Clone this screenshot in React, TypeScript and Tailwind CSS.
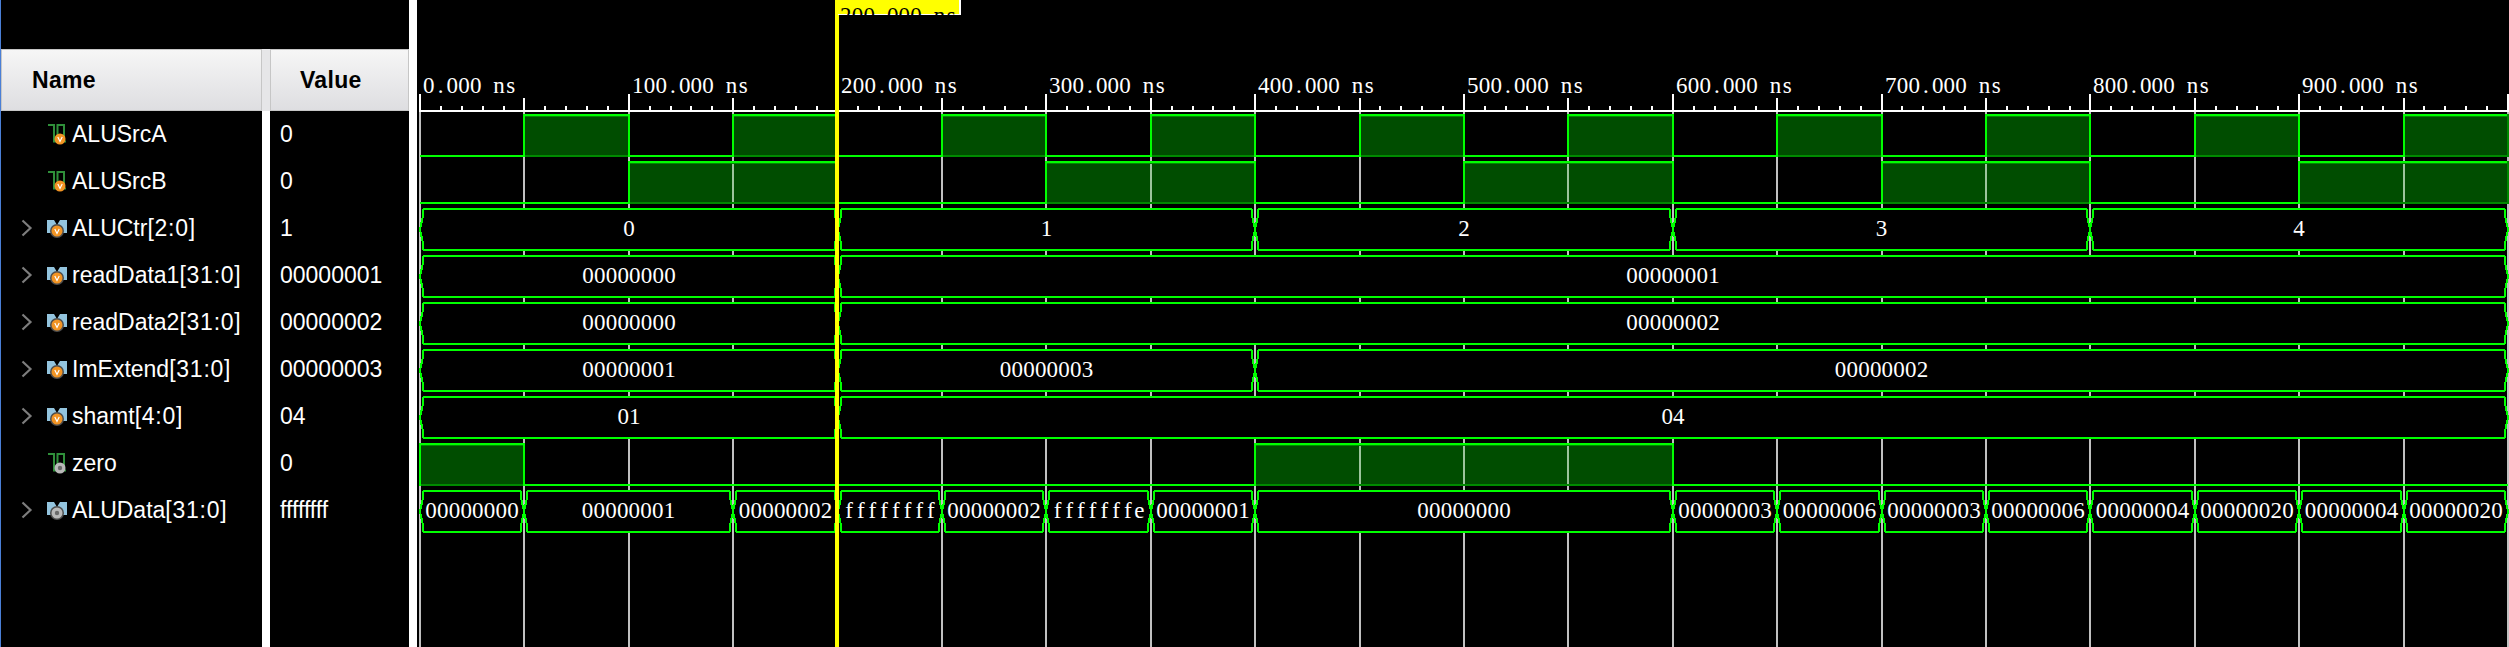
import { FC } from "react";

type Signal = { name: string; range?: string; value: string; bus: boolean; dim?: boolean };

const signals: Signal[] = [
  { name: "ALUSrcA", value: "0", bus: false },
  { name: "ALUSrcB", value: "0", bus: false },
  { name: "ALUCtr", range: "[2:0]", value: "1", bus: true },
  { name: "readData1", range: "[31:0]", value: "00000001", bus: true },
  { name: "readData2", range: "[31:0]", value: "00000002", bus: true },
  { name: "ImExtend", range: "[31:0]", value: "00000003", bus: true },
  { name: "shamt", range: "[4:0]", value: "04", bus: true },
  { name: "zero", value: "0", bus: false, dim: true },
  { name: "ALUData", range: "[31:0]", value: "ffffffff", bus: true, dim: true },
];

const X0 = 420;
const PX_PER_NS = 2.088;
const xAt = (ns: number) => Math.round(X0 + ns * PX_PER_NS);

const GREEN = "#00ff00";
const FILL = "#004d00";
const DARK = "#008a00";
const CELL = 11.7;

const charWidth = (c: string) => {
  if (c === "f") return 0.333;
  if (c === "e") return 0.444;
  if (c === "s") return 0.389;
  if (c === "." || c === " ") return 0.25;
  return 0.5;
};

// the simulator draws a fixed pitch font, so every glyph gets its own cell
const cellXs = (text: string, start: number) =>
  text
    .split("")
    .map((c, i) => (start + i * CELL + (CELL - charWidth(c) * 23) / 2).toFixed(1))
    .join(" ");

const wires: { top: number; highs: [number, number][] }[] = [
  {
    top: 115,
    highs: [
      [50, 100],
      [150, 200],
      [250, 300],
      [350, 400],
      [450, 500],
      [550, 600],
      [650, 700],
      [750, 800],
      [850, 900],
      [950, 1000],
    ],
  },
  {
    top: 162,
    highs: [
      [100, 200],
      [300, 400],
      [500, 600],
      [700, 800],
      [900, 1000],
    ],
  },
  { top: 444, highs: [[0, 50], [400, 600]] },
];

const buses: { top: number; segs: [number, number, string][] }[] = [
  {
    top: 209,
    segs: [
      [0, 200, "0"],
      [200, 400, "1"],
      [400, 600, "2"],
      [600, 800, "3"],
      [800, 1000, "4"],
    ],
  },
  { top: 256, segs: [[0, 200, "00000000"], [200, 1000, "00000001"]] },
  { top: 303, segs: [[0, 200, "00000000"], [200, 1000, "00000002"]] },
  {
    top: 350,
    segs: [
      [0, 200, "00000001"],
      [200, 400, "00000003"],
      [400, 1000, "00000002"],
    ],
  },
  { top: 397, segs: [[0, 200, "01"], [200, 1000, "04"]] },
  {
    top: 491,
    segs: [
      [0, 50, "00000000"],
      [50, 150, "00000001"],
      [150, 200, "00000002"],
      [200, 250, "ffffffff"],
      [250, 300, "00000002"],
      [300, 350, "fffffffe"],
      [350, 400, "00000001"],
      [400, 600, "00000000"],
      [600, 650, "00000003"],
      [650, 700, "00000006"],
      [700, 750, "00000003"],
      [750, 800, "00000006"],
      [800, 850, "00000004"],
      [850, 900, "00000020"],
      [900, 950, "00000004"],
      [950, 1000, "00000020"],
    ],
  },
];

const range = (n: number, step: number) =>
  Array.from({ length: n }, (_, i) => i * step);

const Chevron: FC = () => (
  <svg width="12" height="18" viewBox="0 0 12 18" fill="none">
    <polyline points="1.5,1.5 9.5,9 1.5,16.5" stroke="#7d7d7d" strokeWidth="2.2" />
  </svg>
);

const Badge: FC<{ dim?: boolean; cx: number; cy: number }> = ({ dim, cx, cy }) =>
  dim ? (
    <>
      <circle cx={cx} cy={cy} r="5.5" fill="#b9b9b9" />
      <circle cx={cx} cy={cy} r="2.2" fill="#6a6a6a" />
    </>
  ) : (
    <>
      <circle cx={cx} cy={cy} r="5.5" fill="#f29423" />
      <polyline
        points={`${cx - 2.2},${cy - 2} ${cx},${cy + 2.5} ${cx + 2.2},${cy - 2}`}
        fill="none"
        stroke="#fff"
        strokeWidth="1.2"
      />
    </>
  );

const SignalIcon: FC<{ bus: boolean; dim?: boolean }> = ({ bus, dim }) => (
  <svg width="22" height="22" viewBox="0 0 22 22" className="shrink-0">
    {bus ? (
      <>
        <path d="M0 3 H7 L10 8 L13 3 H20 V16 H13.5 L10 12 L6.5 16 H0 Z" fill="#93c4de" />
        <circle cx="10" cy="14" r="7" fill="#4d4d4d" />
        <Badge dim={dim} cx={10} cy={14} />
      </>
    ) : (
      <>
        <path
          d="M1 2 H7 V18.5 H19 M10.5 18.5 V2 H17 V18.5"
          fill="none"
          stroke="#2f8f3a"
          strokeWidth="2"
        />
        <Badge dim={dim} cx={13} cy={16} />
      </>
    )}
  </svg>
);

const HeaderCell: FC<{ label: string; pad: string }> = ({ label, pad }) => (
  <div
    className={`flex h-[62px] items-center border border-[#c6c6c6] bg-gradient-to-b from-[#f6f6f6] to-[#dedee1] text-[23px] font-bold tracking-[0.3px] text-black ${pad}`}
  >
    {label}
  </div>
);

const NamePanel: FC = () => (
  <div className="flex w-[261px] shrink-0 flex-col">
    <div className="h-[49px]" />
    <HeaderCell label="Name" pad="pl-[30px]" />
    {signals.map((s) => (
      <div key={s.name} className="flex h-[47px] items-center pb-px text-[23px] text-white">
        <div className="ml-[20px] w-[26px]">{s.bus && <Chevron />}</div>
        <SignalIcon bus={s.bus} dim={s.dim} />
        <span className="ml-[3px] whitespace-nowrap">
          {s.name}
          {s.range && <span className="tracking-[0.75px]">{s.range}</span>}
        </span>
      </div>
    ))}
  </div>
);

const ValuePanel: FC = () => (
  <div className="flex w-[139px] shrink-0 flex-col">
    <div className="h-[49px]" />
    <HeaderCell label="Value" pad="pl-[29px]" />
    {signals.map((s) => (
      <div key={s.name} className="flex h-[47px] items-center pb-px pl-[10px] text-[23px] text-white">
        {s.value}
      </div>
    ))}
  </div>
);

const Wave: FC = () => {
  const serif = "font-['Liberation_Serif',serif] text-[23px]";
  return (
    <svg
      className="h-[647px] w-[2092px] shrink-0"
      viewBox="417 0 2092 647"
      shapeRendering="crispEdges"
    >
      <defs>
        <clipPath id="cursor-label">
          <rect x="835" y="0" width="125" height="15" />
        </clipPath>
      </defs>

      {/* ruler */}
      <rect x="419" y="110" width="2090" height="2" fill="#fff" />
      {range(101, 10).map((ns) => {
        const top = ns % 100 === 0 ? 94 : ns % 50 === 0 ? 98 : 106;
        return <rect key={ns} x={xAt(ns) - 1} y={top} width="2" height={111 - top} fill="#fff" />;
      })}
      {range(10, 100).map((ns) => {
        const label = `${ns}.000 ns`;
        return (
          <text key={ns} y="93" x={cellXs(label, xAt(ns) + 3)} className={`fill-white ${serif}`}>
            {label}
          </text>
        );
      })}

      {/* grid */}
      {range(21, 50).map((ns) => (
        <rect key={ns} x={xAt(ns) - 1} y="112" width="2" height="535" fill="#c0c0c0" />
      ))}

      {/* single bit signals */}
      {wires.map((w) => {
        const low = w.top + 41;
        let last = 0;
        const lows: [number, number][] = [];
        w.highs.forEach(([a, b]) => {
          if (a > last) lows.push([last, a]);
          last = b;
        });
        if (last < 1000) lows.push([last, 1000]);
        return (
          <g key={w.top}>
            {lows.map(([a, b]) => (
              <rect key={a} x={xAt(a)} y={low - 1} width={xAt(b) - xAt(a)} height="2" fill={GREEN} />
            ))}
            {w.highs.map(([a, b]) => (
              <g key={a}>
                <rect x={xAt(a)} y={w.top} width={xAt(b) - xAt(a)} height={41} fill={FILL} />
                {range(Math.round((b - a) / 50) - 1, 50).map((n) => (
                  <rect
                    key={n}
                    x={xAt(a + 50 + n) - 1}
                    y={w.top}
                    width="2"
                    height="41"
                    fill="#9cc49c"
                  />
                ))}
                <rect x={xAt(a)} y={low - 1} width={xAt(b) - xAt(a)} height="2" fill={DARK} />
                <rect x={xAt(a)} y={w.top + 1} width={xAt(b) - xAt(a)} height="1" fill={DARK} />
                <rect x={xAt(a) - 1} y={w.top - 1} width={xAt(b) - xAt(a) + 2} height="2" fill={GREEN} />
                <rect x={xAt(a) - 1} y={w.top - 1} width="2" height={43} fill={GREEN} />
                <rect x={xAt(b) - 1} y={w.top - 1} width="2" height={43} fill={b === 1000 ? DARK : GREEN} />
              </g>
            ))}
          </g>
        );
      })}

      {/* buses */}
      {buses.map((b) => {
        const top = b.top;
        const bot = b.top + 41;
        const mid = b.top + 20.5;
        return (
          <g key={top}>
            {b.segs.map(([a, e, label]) => {
              const l = xAt(a);
              const r = xAt(e);
              const pts = [
                [l + 3.5, top],
                [r - 3.5, top],
                [r - 2.5, top + 9],
                [r, mid],
                [r - 2.5, bot - 9],
                [r - 3.5, bot],
                [l + 3.5, bot],
                [l + 2.5, bot - 9],
                [l, mid],
                [l + 2.5, top + 9],
              ]
                .map((p) => p.join(","))
                .join(" ");
              const width = label.length * CELL;
              return (
                <g key={a}>
                  <polygon points={pts} fill="#000" stroke={GREEN} strokeWidth="2" />
                  <text
                    y={mid + 6.5}
                    x={cellXs(label, (l + r) / 2 - width / 2)}
                    className={`fill-white ${serif}`}
                  >
                    {label}
                  </text>
                </g>
              );
            })}
          </g>
        );
      })}

      {/* cursor */}
      <rect x="835" y="0" width="4" height="647" fill="#ffff00" />
      <rect x="835" y="0" width="125" height="14" fill="#ffff00" />
      <rect x="838" y="14" width="122" height="1" fill="#fff" />
      <rect x="959" y="0" width="2" height="15" fill="#fff" />
      <g clipPath="url(#cursor-label)">
        <text y="23" x={cellXs("200.000 ns", 840)} className={`fill-black ${serif}`}>
          200.000 ns
        </text>
      </g>
    </svg>
  );
};

const App: FC = () => {
  return (
    <div className="flex h-[647px] w-[2509px] overflow-hidden border-l border-[#4a7fd6] bg-black font-['Liberation_Sans',Arial,sans-serif]">
      <NamePanel />
      <div className="flex w-2 shrink-0 flex-col">
        <div className="h-[49px] bg-black" />
        <div className="h-[62px] bg-[#e6e6e8]" />
        <div className="flex-1 bg-white" />
      </div>
      <ValuePanel />
      <div className="w-2 shrink-0 bg-white" />
      <Wave />
    </div>
  );
};

export default App;
